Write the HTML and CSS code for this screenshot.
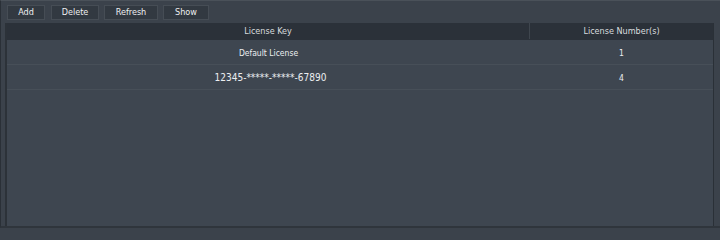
FILE: index.html
```html
<!DOCTYPE html>
<html>
<head>
<meta charset="utf-8">
<link rel="stylesheet" href="styles.css">
</head>
<body>
<div class="frame">
  <div class="toolbar">
    <button class="btn btn-add">Add</button>
    <button class="btn btn-delete">Delete</button>
    <button class="btn btn-refresh">Refresh</button>
    <button class="btn btn-show">Show</button>
  </div>
  <div class="panel">
    <div class="row head">
      <div class="cell key">License Key</div>
      <div class="cell num">License Number(s)</div>
    </div>
    <div class="row">
      <div class="cell key small">Default License</div>
      <div class="cell num small">1</div>
    </div>
    <div class="row">
      <div class="cell key large">12345-*****-*****-67890</div>
      <div class="cell num small">4</div>
    </div>
  </div>
</div>
</body>
</html>
```
FILE: styles.css
```css
html, body {
  margin: 0;
  padding: 0;
  background: #3b424b;
}
body {
  width: 720px;
  height: 228px;
  overflow: hidden;
  font-family: "DejaVu Sans Condensed", "DejaVu Sans", sans-serif;
  color: #eceef0;
}
.frame {
  box-sizing: border-box;
  width: 720px;
  height: 228px;
  border-left: 1px solid #2a3037;
  border-top: 1px solid #4a5159;
  border-bottom: 2px solid #2f353c;
  background: #3b424b;
  display: flex;
  flex-direction: column;
  padding-left: 4px;
}
.toolbar {
  display: flex;
  align-items: center;
  height: 22px;
  padding-left: 2px;
  gap: 5px;
  box-sizing: border-box;
}
.btn {
  box-sizing: border-box;
  height: 15px;
  padding: 0;
  margin: 0;
  background: #323941;
  border: 1px solid #464d55;
  color: #eef0f2;
  font-family: inherit;
  font-size: 9px;
  line-height: 13px;
  text-align: center;
}
.btn-add { width: 38px; }
.btn-delete { width: 48px; margin-left: 1px; }
.btn-refresh { width: 54px; }
.btn-show { width: 46px; }
.panel {
  flex: 1;
  width: 709px;
  box-sizing: border-box;
  border-left: 2px solid #2c3239;
  border-right: 1px solid #2a3037;
  background: #3e4650;
}
.row {
  display: flex;
  height: 25px;
  border-bottom: 1px solid #474f58;
  box-sizing: border-box;
}
.row.head {
  height: 17px;
  background: #2b3139;
  border-bottom: 1px solid #2b3139;
}
.cell {
  display: flex;
  align-items: center;
  justify-content: center;
  font-size: 9px;
  padding-top: 1px;
}
.head .cell {
  color: #d9dcdf;
  font-size: 9px;
  padding-top: 0;
}
.key {
  width: 523px;
  border-right: 1px solid #3f464e;
  box-sizing: border-box;
}
.row:not(.head) .key { border-right: none; }
.num {
  flex: 1;
}
.small { font-size: 8.5px; }
.large { font-size: 10px; padding-left: 4px; }
```
